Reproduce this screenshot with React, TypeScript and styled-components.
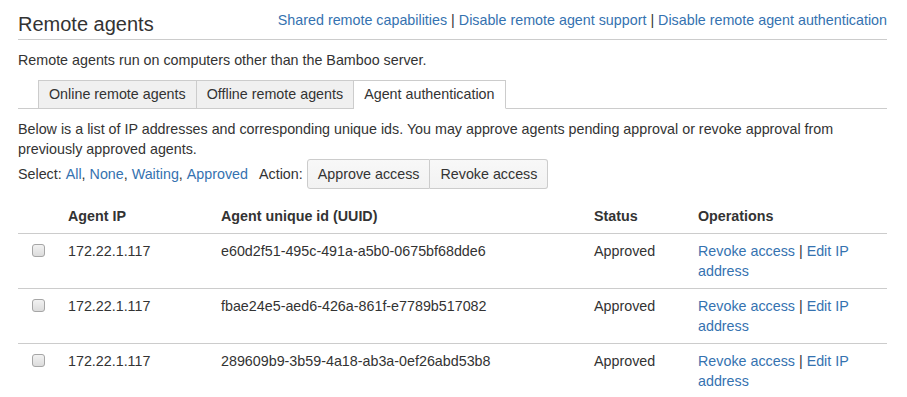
import React from 'react';
import styled, { createGlobalStyle } from 'styled-components';

const GlobalStyle = createGlobalStyle`
  html, body {
    margin: 0;
    padding: 0;
    background: #ffffff;
  }
  body {
    font-family: Arial, 'Liberation Sans', sans-serif;
    font-size: 14.3px;
    line-height: 20px;
    color: #333333;
  }
`;

const Page = styled.div`
  padding: 9px 20px 0 18px;
`;

const Header = styled.header`
  display: flex;
  justify-content: space-between;
  align-items: flex-start;
  border-bottom: 1px solid #cccccc;
`;

const Title = styled.h1`
  margin: 0;
  font-size: 20px;
  font-weight: normal;
  line-height: 30px;
  color: #333333;
`;

const HeaderLinks = styled.div`
  line-height: 20px;
  padding-top: 1px;
`;

const Link = styled.a`
  color: #3572b0;
  text-decoration: none;
  cursor: pointer;
`;

const Sep = styled.span`
  color: #333333;
  margin: 0 4px;
`;

const Intro = styled.p`
  margin: 10px 0 10px;
`;

const Tabs = styled.ul`
  display: flex;
  list-style: none;
  margin: 0;
  padding: 0 0 0 20px;
  border-bottom: 1px solid #cccccc;
`;

const Tab = styled.li<{ $active?: boolean }>`
  padding: 3px 10px 4px;
  margin-bottom: -1px;
  border: 1px solid #cccccc;
  border-left-width: 0;
  border-bottom-color: ${({ $active }) => ($active ? '#ffffff' : '#cccccc')};
  background: ${({ $active }) => ($active ? '#ffffff' : '#f0f0f0')};
  color: #333333;
  cursor: pointer;

  &:first-child {
    border-left-width: 1px;
  }
`;

const Description = styled.p`
  margin: 10px 0 0;
`;

const ActionRow = styled.div`
  display: flex;
  align-items: center;
  height: 30px;
`;

const Label = styled.span`
  margin-right: 4px;
`;

const ActionLabel = styled.span`
  margin: 0 4px 0 11px;
`;

const ButtonGroup = styled.div`
  display: flex;
`;

const Button = styled.button`
  height: 30px;
  padding: 0 10px;
  font-family: inherit;
  font-size: 14.3px;
  color: #333333;
  background: linear-gradient(#f8f8f8, #f2f2f2);
  border: 1px solid #cccccc;
  cursor: pointer;

  &:first-child {
    border-radius: 3px 0 0 3px;
  }
  &:last-child {
    border-left: 0;
    border-radius: 0 3px 3px 0;
  }
`;

const Table = styled.table`
  width: 100%;
  margin-top: 10px;
  border-collapse: collapse;
  table-layout: fixed;
`;

// widths are content widths; each cell adds 20px of horizontal padding
const Th = styled.th<{ $w?: number }>`
  width: ${({ $w }) => ($w ? `${$w}px` : 'auto')};
  padding: 7px 10px;
  text-align: left;
  font-weight: bold;
  border-bottom: 1px solid #cccccc;
`;

const Td = styled.td`
  padding: 7px 10px;
  vertical-align: top;
  border-bottom: 1px solid #cccccc;
`;

const Row = styled.tr`
  &:last-child ${Td} {
    border-bottom: 0;
  }
`;

const Checkbox = styled.input.attrs({ type: 'checkbox' })`
  appearance: none;
  width: 13px;
  height: 13px;
  margin: 3px 0 0 4px;
  border: 1px solid #a6a6a6;
  border-radius: 3px;
  background: linear-gradient(#f2f2f2, #dcdcdc);
  vertical-align: top;
  cursor: pointer;
`;

const agents = [
  { ip: '172.22.1.117', uuid: 'e60d2f51-495c-491a-a5b0-0675bf68dde6' },
  { ip: '172.22.1.117', uuid: 'fbae24e5-aed6-426a-861f-e7789b517082' },
  { ip: '172.22.1.117', uuid: '289609b9-3b59-4a18-ab3a-0ef26abd53b8' },
];

export default function App() {
  return (
    <Page>
      <GlobalStyle />
      <Header>
        <Title>Remote agents</Title>
        <HeaderLinks>
          <Link>Shared remote capabilities</Link>
          <Sep>|</Sep>
          <Link>Disable remote agent support</Link>
          <Sep>|</Sep>
          <Link>Disable remote agent authentication</Link>
        </HeaderLinks>
      </Header>
      <Intro>Remote agents run on computers other than the Bamboo server.</Intro>
      <Tabs>
        <Tab>Online remote agents</Tab>
        <Tab>Offline remote agents</Tab>
        <Tab $active>Agent authentication</Tab>
      </Tabs>
      <Description>
        Below is a list of IP addresses and corresponding unique ids. You may approve agents pending approval or revoke
        approval from previously approved agents.
      </Description>
      <ActionRow>
        <Label>Select:</Label>
        <Link>All</Link>,&nbsp;<Link>None</Link>,&nbsp;<Link>Waiting</Link>,&nbsp;<Link>Approved</Link>
        <ActionLabel>Action:</ActionLabel>
        <ButtonGroup>
          <Button>Approve access</Button>
          <Button>Revoke access</Button>
        </ButtonGroup>
      </ActionRow>
      <Table>
        <thead>
          <tr>
            <Th $w={20} />
            <Th $w={133}>Agent IP</Th>
            <Th $w={353}>Agent unique id (UUID)</Th>
            <Th $w={84}>Status</Th>
            <Th>Operations</Th>
          </tr>
        </thead>
        <tbody>
          {agents.map((a) => (
            <Row key={a.uuid}>
              <Td>
                <Checkbox />
              </Td>
              <Td>{a.ip}</Td>
              <Td>{a.uuid}</Td>
              <Td>Approved</Td>
              <Td>
                <Link>Revoke access</Link> | <Link>Edit IP address</Link>
              </Td>
            </Row>
          ))}
        </tbody>
      </Table>
    </Page>
  );
}
